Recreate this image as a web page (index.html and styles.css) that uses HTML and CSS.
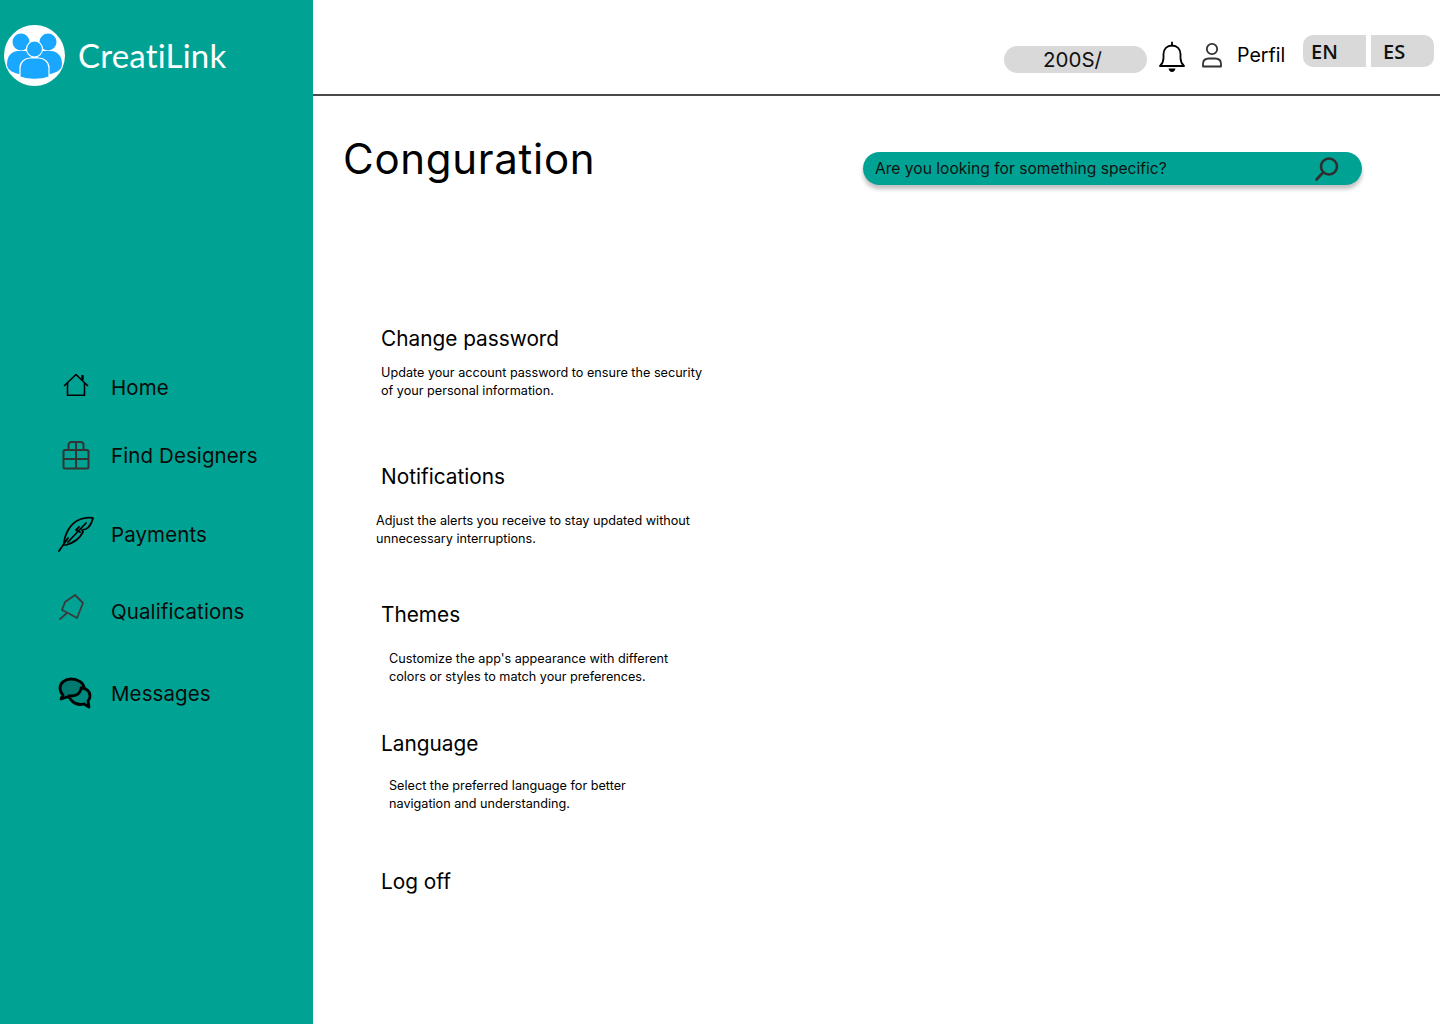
FILE: index.html
```html
<!DOCTYPE html>
<html lang="en">
<head>
<meta charset="utf-8">
<title>CreatiLink</title>
<link rel="stylesheet" href="styles.css">
</head>
<body>
<div class="app">
  <aside class="sidebar">
    <div class="brand">
      <svg class="logo" width="61" height="61" viewBox="0 0 61 61">
        <circle cx="30.500" cy="30.500" r="30.500" fill="#fff"/>
        <g fill="#1aa7ff">
          <circle cx="17" cy="17" r="8.500"/>
          <circle cx="44" cy="17" r="8.500"/>
          <path d="M3 39c0-8 5-13 11-13h8l6 5-9 19C10 48 3 46 3 39z"/>
          <path d="M58 39c0-8-5-13-11-13h-8l-6 5 9 19c9-2 16-4 16-11z"/>
        </g>
        <g fill="#1aa7ff" stroke="#fff" stroke-width="1.200">
          <circle cx="30.500" cy="24" r="8"/>
          <path d="M16 52V43c0-6 5-10 10-10h9c5 0 10 4 10 10v9c-8 3-21 3-29 0z"/>
        </g>
      </svg>
      <span class="brand-name">CreatiLink</span>
    </div>
    <nav class="nav">
      <a class="nav-item nav-home">
        <span class="nav-icon">
          <svg width="26" height="24" viewBox="0 0 26 24" fill="none" stroke="#000" stroke-width="1.600" stroke-linejoin="round"><path d="M1 13 13 1.500 25 13"/><path d="M4.500 10v12.200h17V10"/><path d="M19.500 2v5" stroke-width="2.400"/></svg>
        </span>
        <span>Home</span>
      </a>
      <a class="nav-item nav-find">
        <span class="nav-icon">
          <svg width="28" height="30" viewBox="0 0 28 30" fill="none" stroke="#333" stroke-width="2" stroke-linejoin="round"><rect x="1.500" y="10" width="25" height="18.500" rx="1.500"/><path d="M1.500 19h25M14 3v25.500"/><path d="M6.500 10V5a3 3 0 0 1 3-3H14v8M21.500 10V5a3 3 0 0 0-3-3H14"/></svg>
        </span>
        <span>Find Designers</span>
      </a>
      <a class="nav-item nav-pay">
        <span class="nav-icon">
          <svg width="36" height="36" viewBox="0 0 36 36" fill="none" stroke="#000" stroke-width="1.800" stroke-linecap="round" stroke-linejoin="round"><path d="M1 35 10 22"/><path d="M6 29C6 18 13 6 23 3c4-1 9-2 12-1-1 4-3 9-7 11l-4 1 1 2c-3 6-10 11-17 13"/><path d="M10 26 28 7M22 16l-4-2 3-3"/></svg>
        </span>
        <span>Payments</span>
      </a>
      <a class="nav-item nav-qual">
        <span class="nav-icon">
          <svg width="26" height="28" viewBox="0 0 26 28" fill="none" stroke="#3a3a3a" stroke-width="1.800" stroke-linejoin="round" stroke-linecap="round"><path d="M16 2 24 10 18 25 9 20 3 17 6 9z"/><path d="M8 20 1 26"/></svg>
        </span>
        <span>Qualifications</span>
      </a>
      <a class="nav-item nav-msg">
        <span class="nav-icon">
          <svg width="34" height="32" viewBox="0 0 34 32" stroke="#000" stroke-width="2.800" stroke-linejoin="round"><path fill="#007a70" d="M13 2C7 2 2 6 2 11c0 3 1 5 3 7l-2 4 6-2c4 1 8 1 11-1 4-2 6-5 6-8 0-5-6-9-13-9z"/><path fill="#00897e" d="M23 11c5 0 9 3 9 8 0 2-1 4-2 5l1 6-5-3c-4 1-9 0-12-3-2-2-3-3-3-5 3 0 8 0 10-3 1-1 2-3 2-5z"/></svg>
        </span>
        <span>Messages</span>
      </a>
    </nav>
  </aside>
  <div class="content">
    <header class="topbar">
      <div class="balance">200S/</div>
      <svg class="bell" width="28" height="32" viewBox="0 0 28 32" fill="none" stroke="#000" stroke-width="1.800" stroke-linejoin="round"><path d="M2 25c2-2 3.500-4 3.500-8v-4C5.500 8 9 4.500 14 4.500S22.500 8 22.500 13v4c0 4 1.500 6 3.500 8z"/><path d="M14 1.500v3" stroke-linecap="round"/><path d="M10.500 27.500h7c-.5 2.500-2 3.500-3.500 3.500s-3-1-3.500-3.500z" fill="#000" stroke="none"/></svg>
      <svg class="user" width="22" height="26" viewBox="0 0 22 26" fill="none" stroke="#333" stroke-width="1.800"><circle cx="11" cy="7" r="5.200"/><path d="M2 24.500v-2.500c0-3.500 2.500-5.500 6-5.500h6c3.500 0 6 2 6 5.500v2.500z" stroke-linejoin="round"/></svg>
      <span class="profile">Perfil</span>
      <div class="langs">
        <span class="lang lang-en">EN</span>
        <span class="lang lang-es">ES</span>
      </div>
    </header>
    <main class="main">
      <div class="title-row">
        <h1 class="title">Conguration</h1>
        <div class="search">
          <span>Are you looking for something specific?</span>
          <svg width="26" height="26" viewBox="0 0 26 26" fill="none" stroke="#2e2e2e" stroke-width="2.600" stroke-linecap="round"><circle cx="15" cy="10.500" r="8"/><path d="M9 16.500 2.500 23.500"/></svg>
        </div>
      </div>
      <section class="settings">
        <div class="setting setting-password">
          <h2>Change password</h2>
          <p>Update your account password to ensure the security<br>of your personal information.</p>
        </div>
        <div class="setting setting-notifications">
          <h2>Notifications</h2>
          <p>Adjust the alerts you receive to stay updated without<br>unnecessary interruptions.</p>
        </div>
        <div class="setting setting-themes">
          <h2>Themes</h2>
          <p>Customize the app's appearance with different<br>colors or styles to match your preferences.</p>
        </div>
        <div class="setting setting-language">
          <h2>Language</h2>
          <p>Select the preferred language for better<br>navigation and understanding.</p>
        </div>
        <div class="setting setting-logoff">
          <h2>Log off</h2>
        </div>
      </section>
    </main>
  </div>
</div>
</body>
</html>
```
FILE: styles.css
```css
* { box-sizing: border-box; }
html, body { margin: 0; height: 100%; }
body {
  font-family: Inter, "Liberation Sans", sans-serif;
  color: #000;
  background: #fff;
}
.app { display: flex; width: 1440px; height: 1024px; overflow: hidden; }

.sidebar { width: 313px; flex: none; background: #00a393; }
.brand { display: flex; align-items: flex-start; gap: 13px; padding: 25px 0 0 4px; height: 334px; }
.logo { flex: none; }
.brand-name {
  font-family: Lato, sans-serif;
  font-weight: 400;
  font-size: 33px;
  line-height: 61px;
  color: #fff;
  letter-spacing: 0.2px;
}
.nav { display: flex; flex-direction: column; }
.nav-item {
  display: flex;
  align-items: center;
  font-size: 20.500px;
  letter-spacing: 0.1px;
  color: #0a0a0a;
  height: 40px;
}
.nav-icon { width: 111px; flex: none; display: flex; }
.nav-home { margin-top: 33px; }
.nav-home .nav-icon { padding-left: 63px; margin-top: -4px; }
.nav-find { margin-top: 28px; }
.nav-find .nav-icon { padding-left: 62px; }
.nav-pay { margin-top: 39px; }
.nav-pay .nav-icon { padding-left: 58px; }
.nav-qual { margin-top: 37px; }
.nav-qual .nav-icon { padding-left: 59px; margin-top: -8px; }
.nav-msg { margin-top: 42px; }
.nav-msg .nav-icon { padding-left: 58px; }

.content { flex: 1; min-width: 0; display: flex; flex-direction: column; }
.topbar {
  height: 96px;
  flex: none;
  border-bottom: 2px solid #4a4a4a;
  display: flex;
  align-items: flex-start;
  padding-left: 691px;
}
.balance {
  width: 143px;
  height: 27px;
  margin-top: 46px;
  padding-right: 6px;
  background: #d9d9d9;
  border-radius: 14px;
  font-size: 20.500px;
  line-height: 28px;
  text-align: center;
  color: #111;
}
.bell { margin: 41px 0 0 11px; flex: none; }
.user { margin: 42px 0 0 15px; flex: none; }
.profile { margin: 41px 0 0 14px; width: 66px; font-size: 19.600px; line-height: 28px; }
.langs { display: flex; gap: 5px; margin-top: 35px; }
.lang {
  width: 63px;
  height: 32px;
  background: #d9d9d9;
  font-family: "Open Sans", sans-serif;
  font-weight: 600;
  font-size: 20px;
  line-height: 34px;
  padding-left: 8px;
  color: #111;
}
.lang-en { border-radius: 10px 0 0 10px; }
.lang-es { border-radius: 0 10px 10px 0; padding-left: 12px; }

.main { flex: 1; }
.title-row { display: flex; align-items: flex-start; padding: 36px 0 0 30px; height: 227px; }
.title { margin: 0; width: 520px; font-size: 42px; line-height: 54px; font-weight: 400; letter-spacing: 0.7px; }
.search {
  width: 499px;
  height: 33px;
  margin-top: 20px;
  padding: 0 22px 0 12px;
  background: #00a393;
  border-radius: 17px;
  box-shadow: 0 4px 4px rgba(0, 0, 0, 0.25);
  display: flex;
  align-items: center;
  justify-content: space-between;
  font-size: 15.600px;
  color: #111;
}

.settings { display: flex; flex-direction: column; }
.setting h2 { margin: 0; padding-left: 68px; height: 30px; font-size: 20.800px; line-height: 32px; font-weight: 400; }
.setting p { margin: 0; font-size: 12.650px; line-height: 18px; white-space: nowrap; }
.setting-password p { margin-top: 11px; padding-left: 68px; }
.setting-notifications { margin-top: 61px; }
.setting-notifications p { margin-top: 21px; padding-left: 63px; }
.setting-themes { margin-top: 51px; }
.setting-themes p { margin-top: 21px; padding-left: 76px; }
.setting-language { margin-top: 42px; }
.setting-language p { margin-top: 19px; padding-left: 76px; }
.setting-logoff { margin-top: 53px; }
```
